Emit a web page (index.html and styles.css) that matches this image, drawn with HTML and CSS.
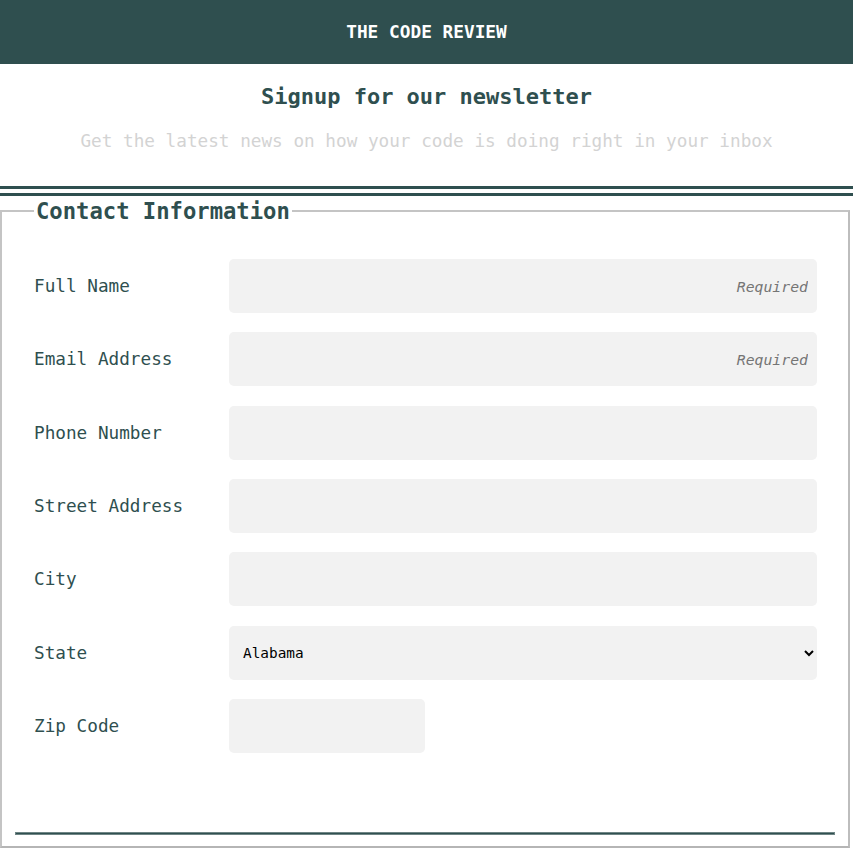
FILE: index.html
```html
<!DOCTYPE html>
<html lang="en">
<head>
<meta charset="utf-8">
<title>The Code Review</title>
<link rel="stylesheet" href="styles.css">
</head>
<body>
<header class="site-header">
  <h1 class="site-title">THE CODE REVIEW</h1>
</header>
<section class="intro">
  <h2 class="intro-title">Signup for our newsletter</h2>
  <p class="intro-text">Get the latest news on how your code is doing right in your inbox</p>
</section>
<div class="double-rule"></div>
<form class="signup">
  <fieldset class="contact">
    <legend class="contact-legend">Contact Information</legend>
    <div class="fields">
      <label class="field-label" for="name">Full Name</label>
      <input class="field-input" id="name" type="text" placeholder="Required">

      <label class="field-label" for="email">Email Address</label>
      <input class="field-input" id="email" type="email" placeholder="Required">

      <label class="field-label" for="phone">Phone Number</label>
      <input class="field-input" id="phone" type="tel">

      <label class="field-label" for="street">Street Address</label>
      <input class="field-input" id="street" type="text">

      <label class="field-label" for="city">City</label>
      <input class="field-input" id="city" type="text">

      <label class="field-label" for="state">State</label>
      <select class="field-input field-select" id="state">
        <option>Alabama</option>
        <option>Alaska</option>
        <option>Arizona</option>
      </select>

      <label class="field-label" for="zip">Zip Code</label>
      <input class="field-input field-zip" id="zip" type="text">
    </div>
    <div class="bottom-rule"></div>
  </fieldset>
</form>
</body>
</html>
```

FILE: styles.css
```css
html, body {
  margin: 0;
  padding: 0;
  background: #ffffff;
}

body {
  font-family: "DejaVu Sans Mono", "Liberation Mono", monospace;
  color: #2f4f4f;
}

.site-header {
  height: 64px;
  background: #2f4f4f;
  display: flex;
  align-items: center;
  justify-content: center;
}

.site-title {
  margin: 0;
  font-size: 17.8px;
  font-weight: bold;
  color: #ffffff;
  line-height: 22px;
}

.intro {
  text-align: center;
  padding-top: 20px;
}

.intro-title {
  margin: 0;
  font-size: 22px;
  line-height: 26px;
  font-weight: bold;
  color: #2f4f4f;
}

.intro-text {
  margin: 20px 0 0;
  font-size: 17.7px;
  line-height: 22px;
  color: #d3d3d3;
}

.double-rule {
  margin-top: 34px;
  height: 4px;
  border-top: 3px solid #2f4f4f;
  border-bottom: 3px solid #2f4f4f;
}

.signup {
  margin: 0;
}

.contact {
  margin: 2px 3px 0 0;
  padding: 0 13px 11px 13px;
  border: 2px solid #c4c4c4;
  border-right-color: #bdbdbd;
  border-bottom-color: #b5b5b5;
  min-width: 0;
}

.contact-legend {
  margin-left: 19px;
  padding: 0 2px;
  font-size: 22.2px;
  line-height: 26px;
  font-weight: bold;
  color: #2f4f4f;
}

.fields {
  display: grid;
  grid-template-columns: 195px 1fr;
  row-gap: 19.33px;
  align-items: center;
  margin: 35px 18px 0 19px;
}

.field-label {
  font-size: 17.7px;
  line-height: 22px;
  color: #2f4f4f;
}

.field-input {
  box-sizing: border-box;
  height: 54px;
  width: 100%;
  border: none;
  border-radius: 5px;
  background: #f2f2f2;
  padding: 0 9px;
  font-family: "DejaVu Sans Mono", "Liberation Mono", monospace;
  font-size: 14.8px;
  color: #000000;
  outline: none;
}

.field-input::placeholder {
  text-align: right;
  font-style: italic;
  color: #757575;
}

.field-select {
  padding: 0 10px 0 10px;
  font-size: 14.4px;
  color: #000000;
}

.field-zip {
  width: 196px;
}

.bottom-rule {
  margin-top: 79px;
  height: 1px;
  background: #2f4f4f;
  border: 1px solid #6f8585;
}
```
